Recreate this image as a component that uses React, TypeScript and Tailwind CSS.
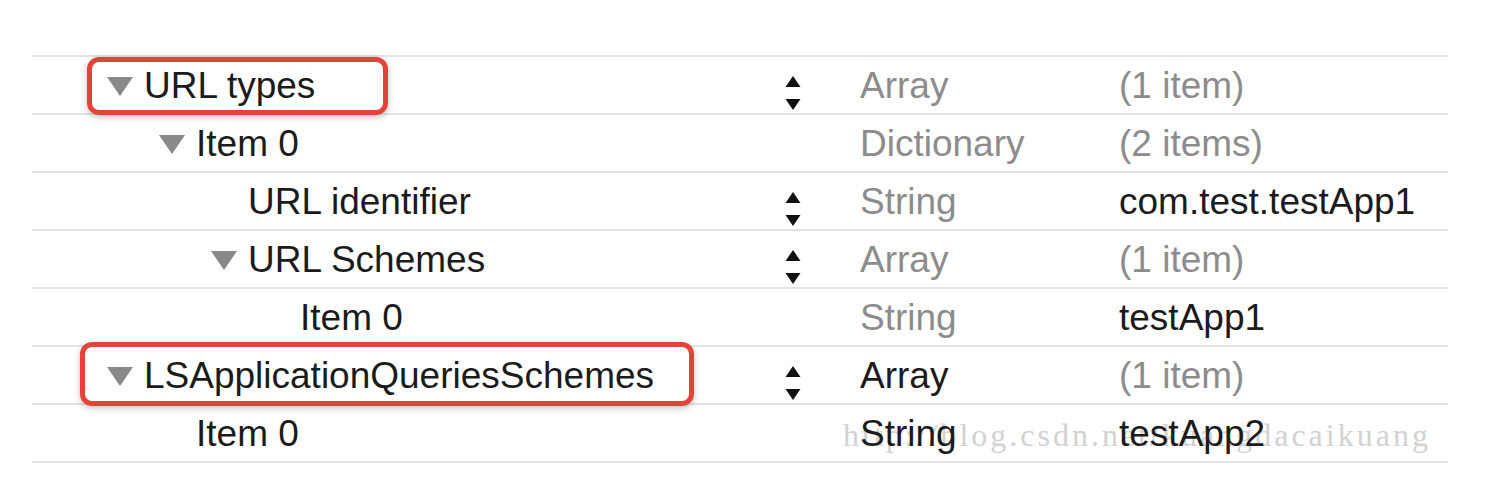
import React from 'react'

type Row = {
  key: string
  level: number
  open?: boolean
  stepper?: boolean
  type: string
  typeDark?: boolean
  value: string
  valueDark?: boolean
}

const ROWS: Row[] = [
  { key: 'URL types', level: 0, open: true, stepper: true, type: 'Array', value: '(1 item)' },
  { key: 'Item 0', level: 1, open: true, type: 'Dictionary', value: '(2 items)' },
  { key: 'URL identifier', level: 2, stepper: true, type: 'String', value: 'com.test.testApp1', valueDark: true },
  { key: 'URL Schemes', level: 2, open: true, stepper: true, type: 'Array', value: '(1 item)' },
  { key: 'Item 0', level: 3, type: 'String', value: 'testApp1', valueDark: true },
  { key: 'LSApplicationQueriesSchemes', level: 0, open: true, stepper: true, type: 'Array', typeDark: true, value: '(1 item)' },
  { key: 'Item 0', level: 1, type: 'String', typeDark: true, value: 'testApp2', valueDark: true },
]

const INDENT = ['pl-[74px]', 'pl-[126px]', 'pl-[178px]', 'pl-[230px]']

function Disclosure({ open }: { open?: boolean }) {
  return (
    <span className="w-[28px] mr-[10px] flex-shrink-0 flex items-center">
      {open && (
        <svg width="28" height="20" viewBox="0 0 28 20" className="mt-[2px]">
          <polygon points="1,1 27,1 14,20" fill="#888888" />
        </svg>
      )}
    </span>
  )
}

function Stepper() {
  return (
    <svg width="16" height="35" viewBox="0 0 16 35">
      <polygon points="8,0 15.5,11 0.5,11" fill="#111111" />
      <polygon points="0.5,23 15.5,23 8,34" fill="#111111" />
    </svg>
  )
}

export default function App() {
  return (
    <div
      className="relative w-[1488px] h-[480px] bg-white pt-[55px] pl-[32px] overflow-hidden"
      style={{ fontFamily: '"Liberation Sans", Arial, sans-serif' }}
    >
      {/* watermark, sits under the table text */}
      <div
        className="absolute left-[843px] top-[419px] text-[32px] leading-none text-[#d2d2d2] tracking-[3px] whitespace-nowrap pointer-events-none"
        style={{ fontFamily: '"Liberation Serif", "Times New Roman", serif' }}
      >
        http://blog.csdn.net/kuangdacaikuang
      </div>

      <div className="relative w-[1416px] border-t-2 border-[#e4e4e4]">
        {ROWS.map((r, i) => (
          <div key={i} className="flex items-center h-[58px] border-b-2 border-[#e4e4e4] text-[37px] leading-none">
            <div className={`w-[753px] flex items-center ${INDENT[r.level]}`}>
              <Disclosure open={r.open} />
              <span className="text-[#1b1b1b] whitespace-nowrap">{r.key}</span>
            </div>
            <div className="w-[75px] self-start pt-[19px] h-full">
              {r.stepper && <Stepper />}
            </div>
            <div className={`w-[259px] whitespace-nowrap ${r.typeDark ? 'text-[#1b1b1b]' : 'text-[#8c8c8c]'}`}>
              {r.type}
            </div>
            <div className={`flex-1 whitespace-nowrap ${r.valueDark ? 'text-[#1b1b1b]' : 'text-[#8c8c8c]'}`}>
              {r.value}
            </div>
          </div>
        ))}
      </div>

      {/* annotation boxes */}
      <div className="absolute left-[87px] top-[57px] w-[301px] h-[58px] rounded-[12px] border-[5px] border-[#e5433a] shadow-[0_2px_6px_rgba(0,0,0,0.25)]" />
      <div className="absolute left-[80px] top-[342px] w-[614px] h-[64px] rounded-[12px] border-[5px] border-[#e5433a] shadow-[0_2px_6px_rgba(0,0,0,0.25)]" />
    </div>
  )
}
